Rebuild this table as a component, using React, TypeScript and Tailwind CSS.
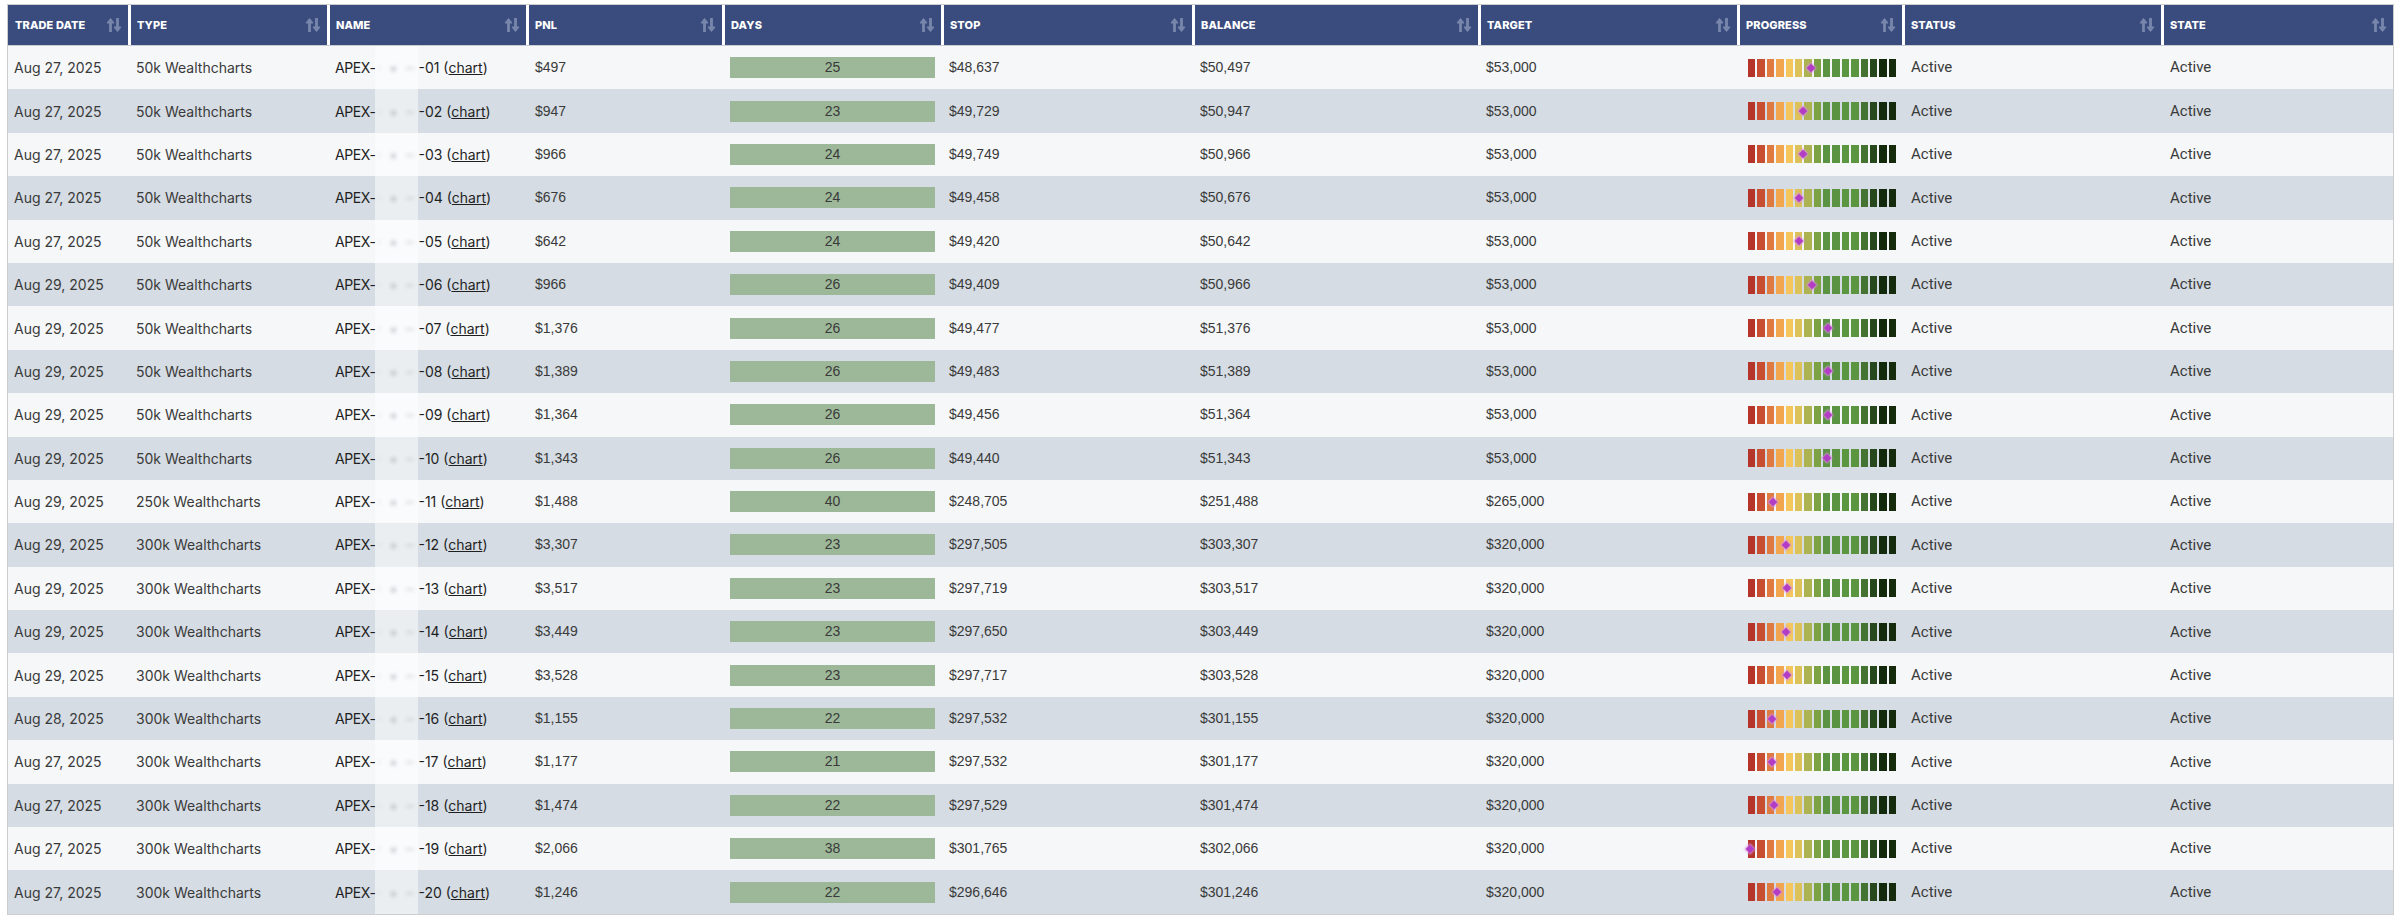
import React from "react";

interface Account {
  date: string;
  type: string;
  id: string;
  pnl: string;
  days: number;
  stop: number;
  balance: number;
  target: number;
}

const rows: Account[] = [
  { date: "Aug 27, 2025", type: "50k Wealthcharts", id: "01", pnl: "$497", days: 25, stop: 48637, balance: 50497, target: 53000 },
  { date: "Aug 27, 2025", type: "50k Wealthcharts", id: "02", pnl: "$947", days: 23, stop: 49729, balance: 50947, target: 53000 },
  { date: "Aug 27, 2025", type: "50k Wealthcharts", id: "03", pnl: "$966", days: 24, stop: 49749, balance: 50966, target: 53000 },
  { date: "Aug 27, 2025", type: "50k Wealthcharts", id: "04", pnl: "$676", days: 24, stop: 49458, balance: 50676, target: 53000 },
  { date: "Aug 27, 2025", type: "50k Wealthcharts", id: "05", pnl: "$642", days: 24, stop: 49420, balance: 50642, target: 53000 },
  { date: "Aug 29, 2025", type: "50k Wealthcharts", id: "06", pnl: "$966", days: 26, stop: 49409, balance: 50966, target: 53000 },
  { date: "Aug 29, 2025", type: "50k Wealthcharts", id: "07", pnl: "$1,376", days: 26, stop: 49477, balance: 51376, target: 53000 },
  { date: "Aug 29, 2025", type: "50k Wealthcharts", id: "08", pnl: "$1,389", days: 26, stop: 49483, balance: 51389, target: 53000 },
  { date: "Aug 29, 2025", type: "50k Wealthcharts", id: "09", pnl: "$1,364", days: 26, stop: 49456, balance: 51364, target: 53000 },
  { date: "Aug 29, 2025", type: "50k Wealthcharts", id: "10", pnl: "$1,343", days: 26, stop: 49440, balance: 51343, target: 53000 },
  { date: "Aug 29, 2025", type: "250k Wealthcharts", id: "11", pnl: "$1,488", days: 40, stop: 248705, balance: 251488, target: 265000 },
  { date: "Aug 29, 2025", type: "300k Wealthcharts", id: "12", pnl: "$3,307", days: 23, stop: 297505, balance: 303307, target: 320000 },
  { date: "Aug 29, 2025", type: "300k Wealthcharts", id: "13", pnl: "$3,517", days: 23, stop: 297719, balance: 303517, target: 320000 },
  { date: "Aug 29, 2025", type: "300k Wealthcharts", id: "14", pnl: "$3,449", days: 23, stop: 297650, balance: 303449, target: 320000 },
  { date: "Aug 29, 2025", type: "300k Wealthcharts", id: "15", pnl: "$3,528", days: 23, stop: 297717, balance: 303528, target: 320000 },
  { date: "Aug 28, 2025", type: "300k Wealthcharts", id: "16", pnl: "$1,155", days: 22, stop: 297532, balance: 301155, target: 320000 },
  { date: "Aug 27, 2025", type: "300k Wealthcharts", id: "17", pnl: "$1,177", days: 21, stop: 297532, balance: 301177, target: 320000 },
  { date: "Aug 27, 2025", type: "300k Wealthcharts", id: "18", pnl: "$1,474", days: 22, stop: 297529, balance: 301474, target: 320000 },
  { date: "Aug 27, 2025", type: "300k Wealthcharts", id: "19", pnl: "$2,066", days: 38, stop: 301765, balance: 302066, target: 320000 },
  { date: "Aug 27, 2025", type: "300k Wealthcharts", id: "20", pnl: "$1,246", days: 22, stop: 296646, balance: 301246, target: 320000 },
];

const headers = ["Trade Date", "Type", "Name", "PnL", "Days", "Stop", "Balance", "Target", "Progress", "Status", "State"];

// red -> yellow -> green -> dark green
const segments = [
  "#b5352a", "#c84e32", "#df7a40", "#f2a64e", "#f4c65b", "#dcc259", "#adb351", "#7da244",
  "#5a9442", "#5a9442", "#5b9641", "#5b953f", "#447332", "#27481d", "#13290b", "#152b0b",
];

const grid = "grid grid-cols-[120px_199px_199px_196px_219px_251px_286px_259px_165px_259px_232px]";

const fmt = (n: number) => "$" + n.toLocaleString("en-US");

function SortIcon() {
  return (
    <svg width="16" height="16" viewBox="0 0 16 16" className="shrink-0">
      <g stroke="#7886ab" fill="#7886ab" strokeLinejoin="round">
        <path d="M4.5 5v10" strokeWidth="2.8" />
        <path d="M1 6 4.5 1.5 8 6Z" strokeWidth="1" />
        <path d="M11.5 1v10" strokeWidth="2.8" />
        <path d="M8 10 11.5 14.5 15 10Z" strokeWidth="1" />
      </g>
    </svg>
  );
}

function Progress({ row }: { row: Account }) {
  // marker sits where balance falls between stop and target
  const pct = (row.balance - row.stop) / (row.target - row.stop);
  return (
    <div className="relative w-[148px] h-[18px]">
      <div className="flex gap-[2px] h-full">
        {segments.map((c, i) => (
          <div key={i} className="flex-1" style={{ backgroundColor: c }} />
        ))}
      </div>
      <div
        className="absolute top-[6px] w-[6px] h-[6px] rotate-45 bg-[#b23cc3] shadow-[0_0_2px_1px_rgba(214,140,225,0.9)]"
        style={{ left: `${pct * 148 - 3}px` }}
      />
    </div>
  );
}

export default function App() {
  return (
    <div className="bg-white min-h-[922px] pt-[4px] pl-[7px] font-['Inter','Liberation_Sans',sans-serif]">
      <div className="w-[2387px] border border-[#cdcdcd]">
        <div className={`${grid} h-[41px] border-b border-[#c9ccd2]`}>
          {headers.map((h, i) => (
            <div
              key={h}
              className={`flex items-center justify-between bg-[#3a4c7e] pr-[6px] ${i === 0 ? "pl-[7px]" : "pl-[6px] border-l-[3px] border-white"}`}
            >
              <span className="text-white text-[11px] font-extrabold uppercase tracking-[0.01em]">{h}</span>
              <SortIcon />
            </div>
          ))}
        </div>
        {rows.map((r, idx) => (
          <div
            key={r.id}
            className={`${grid} h-[43.4px] text-[14px] text-[#3a3a3a] ${idx % 2 === 0 ? "bg-[#f5f7f9]" : "bg-[#d5dce3]"}`}
          >
            <div className="flex items-center pl-[6px]">{r.date}</div>
            <div className="flex items-center pl-[8px]">{r.type}</div>
            <div className="flex items-stretch pl-[8px] text-[#1f1f1f]">
              <span className="flex items-center tracking-[-0.03em]">APEX-</span>
              <span className="w-[43px] bg-white/50 flex items-center justify-center overflow-hidden">
                <span className="blur-[2px] text-[#868d96] opacity-60 tracking-[2px]">· ▪ ‒</span>
              </span>
              <span className="flex items-center">
                -{r.id}&nbsp;(<span className="underline">chart</span>)
              </span>
            </div>
            <div className="flex items-center pl-[9px] font-['Liberation_Sans',sans-serif]">{r.pnl}</div>
            <div className="flex items-center pl-[8px] pr-[6px]">
              <div className="w-full h-[21px] bg-[#9cb898] flex items-center justify-center font-['Liberation_Sans',sans-serif]">
                {r.days}
              </div>
            </div>
            <div className="flex items-center pl-[8px] font-['Liberation_Sans',sans-serif]">{fmt(r.stop)}</div>
            <div className="flex items-center pl-[8px] font-['Liberation_Sans',sans-serif]">{fmt(r.balance)}</div>
            <div className="flex items-center pl-[8px] font-['Liberation_Sans',sans-serif]">{fmt(r.target)}</div>
            <div className="flex items-center pl-[11px]">
              <Progress row={r} />
            </div>
            <div className="flex items-center pl-[9px] text-[15px] font-['Roboto',sans-serif]">Active</div>
            <div className="flex items-center pl-[9px] text-[15px] font-['Roboto',sans-serif]">Active</div>
          </div>
        ))}
      </div>
    </div>
  );
}
